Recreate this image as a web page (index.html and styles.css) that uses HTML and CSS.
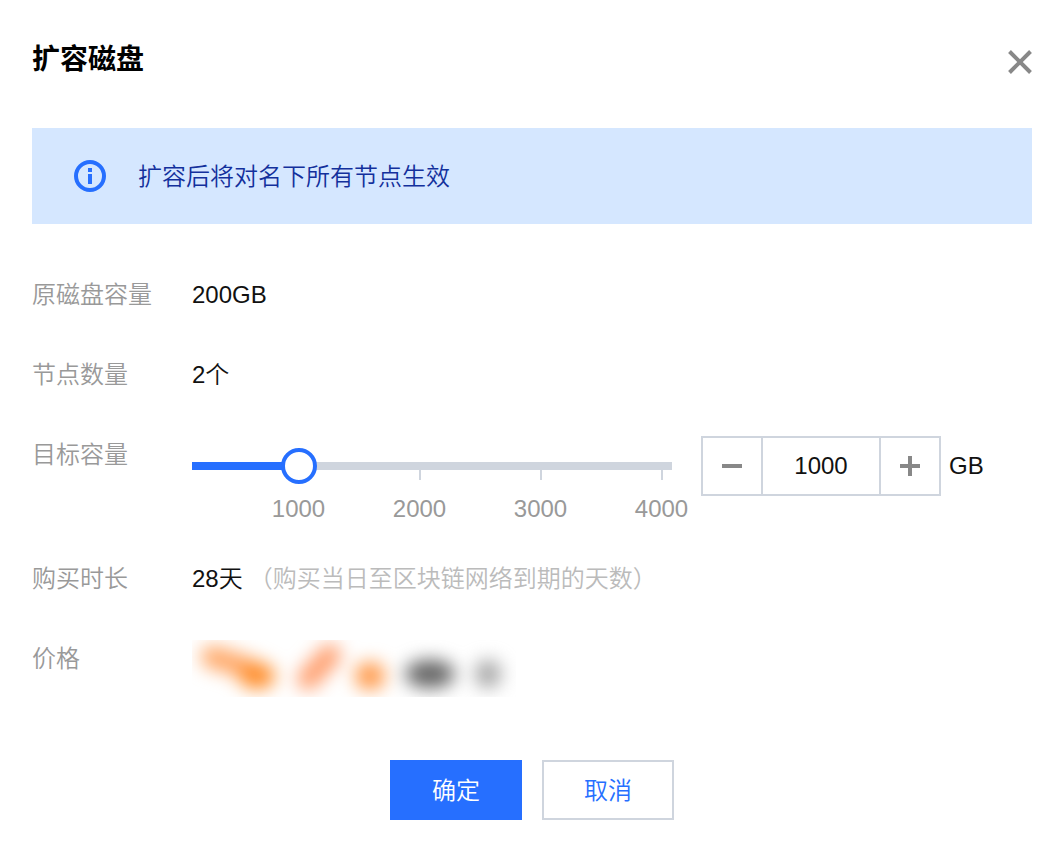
FILE: index.html
```html
<!DOCTYPE html>
<html lang="zh-CN">

<head>
  <meta charset="UTF-8">
  <title>扩容磁盘</title>
  <link rel="stylesheet" href="styles.css">
</head>

<body>
  <form class="dialog">
    <header class="dialog-header">
      <h1>扩容磁盘</h1>
      <button type="button" class="close-button" aria-label="关闭">
        <svg width="24" height="24" viewBox="0 0 24 24">
          <path d="M1.500 1.500L22.500 22.500M22.500 1.500L1.500 22.500" stroke="#888" stroke-width="4" />
        </svg>
      </button>
    </header>

    <div class="alert">
      <svg width="32" height="32" viewBox="0 0 32 32">
        <circle cx="16" cy="16" r="14" fill="none" stroke="#266fff" stroke-width="4" />
        <path d="M14 8h4v4h-4zM14 14h4v10h-4z" fill="#266fff" />
      </svg>
      <p>扩容后将对名下所有节点生效</p>
    </div>

    <div class="row">
      <span class="label">原磁盘容量</span>
      <span class="value">200GB</span>
    </div>

    <div class="row">
      <span class="label">节点数量</span>
      <span class="value">2个</span>
    </div>

    <div class="row row-target">
      <label class="label" for="capacity">目标容量</label>
      <div class="slider">
        <input type="range" id="capacity" min="200" max="4200" step="100" value="1000" style="--fill: 20%">
        <ul class="scale">
          <li>1000</li>
          <li>2000</li>
          <li>3000</li>
          <li>4000</li>
        </ul>
      </div>
      <div class="stepper">
        <button type="button" id="minus" aria-label="减少">
          <svg width="20" height="20" viewBox="0 0 20 20">
            <path d="M0 8h20v4H0z" fill="#888" />
          </svg>
        </button>
        <input type="text" id="amount" value="1000" aria-label="目标容量">
        <button type="button" id="plus" aria-label="增加">
          <svg width="20" height="20" viewBox="0 0 20 20">
            <path d="M0 8h8V0h4v8h8v4h-8v8H8v-8H0z" fill="#888" />
          </svg>
        </button>
      </div>
      <span class="unit">GB</span>
    </div>

    <div class="row">
      <span class="label">购买时长</span>
      <span class="value">28天<span class="hint">（购买当日至区块链网络到期的天数）</span></span>
    </div>

    <div class="row">
      <span class="label">价格</span>
      <svg class="price" width="324" height="57" viewBox="0 0 324 57">
        <defs>
          <filter id="blur" filterUnits="userSpaceOnUse" x="-40" y="-40" width="400" height="140" color-interpolation-filters="sRGB">
            <feGaussianBlur stdDeviation="9" />
          </filter>
        </defs>
        <g filter="url(#blur)">
          <path d="M20 17L44 24L68 34" fill="none" stroke="#ffa766" stroke-width="22" stroke-linecap="round" />
          <ellipse cx="65" cy="36" rx="18" ry="13" fill="#ff8c28" />
          <path d="M116 39L138 15" fill="none" stroke="#ffa070" stroke-width="22" stroke-linecap="round" />
          <ellipse cx="178" cy="36" rx="15" ry="14" fill="#ff9848" />
          <ellipse cx="238" cy="34" rx="25" ry="14" fill="#646464" />
          <ellipse cx="296" cy="34" rx="13" ry="14" fill="#a4a4a4" />
        </g>
      </svg>
    </div>

    <footer class="dialog-footer">
      <button type="submit" class="button button-primary">确定</button>
      <button type="button" class="button">取消</button>
    </footer>
  </form>

  <script>
    const range = document.getElementById('capacity');
    const amount = document.getElementById('amount');

    function setCapacity(value) {
      range.value = value;
      amount.value = range.value;
      const percent = (range.value - range.min) / (range.max - range.min) * 100;
      range.style.setProperty('--fill', percent + '%');
    }

    range.addEventListener('input', () => setCapacity(range.value));
    amount.addEventListener('change', () => setCapacity(amount.value));
    document.getElementById('minus').addEventListener('click', () => setCapacity(Number(range.value) - 100));
    document.getElementById('plus').addEventListener('click', () => setCapacity(Number(range.value) + 100));
  </script>
</body>

</html>
```
FILE: styles.css
```css
* {
  box-sizing: border-box;
}

body {
  margin: 0;
  background-color: #fff;
  color: #111;
}

body,
button,
input {
  font-family: "Liberation Sans", "Noto Sans CJK SC", sans-serif;
  font-size: 24px;
  font-weight: 350;
}

.dialog {
  padding: 40px 20px 26px 32px;
}

.dialog-header {
  display: flex;
  justify-content: space-between;
  align-items: flex-start;
  margin-bottom: 48px;
}

h1 {
  margin: 0;
  font-size: 28px;
  font-weight: bold;
  line-height: 40px;
  color: #000;
}

.close-button {
  display: flex;
  margin-top: 10px;
  padding: 0;
  border: none;
  background: none;
  cursor: pointer;
}

.alert {
  display: flex;
  align-items: center;
  gap: 32px;
  margin-bottom: 52px;
  padding: 27px 42px;
  background-color: #d5e7ff;
  color: #13309c;
  line-height: 40px;
}

.alert p {
  margin: 0;
  padding-top: 2px;
}

.row {
  display: flex;
  align-items: flex-start;
  margin-bottom: 42px;
  line-height: 38px;
}

.row-target {
  margin-bottom: 36px;
}

.label {
  flex: 0 0 160px;
  color: #999;
}

.hint {
  margin-left: 6px;
  color: #bbb;
}

.slider {
  flex: 0 1 480px;
  padding-top: 12px;
}

.slider input {
  display: block;
  position: relative;
  width: 100%;
  height: 36px;
  margin: 0;
  appearance: none;
  background: none;
  cursor: pointer;
}

.slider input::-webkit-slider-runnable-track {
  height: 8px;
  background: linear-gradient(to right, #266fff var(--fill), #cfd5de var(--fill));
}

.slider input::-webkit-slider-thumb {
  width: 36px;
  height: 36px;
  margin-top: -14px;
  appearance: none;
  border: 4px solid #266fff;
  border-radius: 50%;
  background-color: #fff;
}

.scale {
  display: grid;
  grid-template-columns: repeat(4, 1fr);
  margin: -14px -50px 0 46px;
  padding: 0;
  list-style: none;
  text-align: center;
  line-height: 30px;
  color: #999;
}

.scale li::before {
  content: "";
  display: block;
  width: 2px;
  height: 10px;
  margin: 0 auto 14px;
  background-color: #cfd5de;
}

.stepper {
  display: flex;
  flex: none;
  width: 240px;
  height: 60px;
  margin-left: 29px;
  border: 2px solid #cfd5de;
}

.stepper button {
  display: flex;
  flex: 0 0 58px;
  align-items: center;
  justify-content: center;
  padding: 0;
  border: none;
  background: none;
  cursor: pointer;
}

.stepper input {
  flex: 1;
  min-width: 0;
  padding: 0;
  border: solid #cfd5de;
  border-width: 0 2px;
  text-align: center;
  color: #111;
}

.unit {
  margin-left: 8px;
  line-height: 60px;
}

.price {
  display: block;
}

.dialog-footer {
  display: flex;
  justify-content: center;
  gap: 20px;
  margin-top: 63px;
}

.button {
  width: 132px;
  height: 60px;
  padding: 0 0 4px;
  border: 2px solid #cfd5de;
  background-color: #fff;
  color: #266fff;
  cursor: pointer;
}

.button-primary {
  border-color: #266fff;
  background-color: #266fff;
  color: #fff;
}
```
